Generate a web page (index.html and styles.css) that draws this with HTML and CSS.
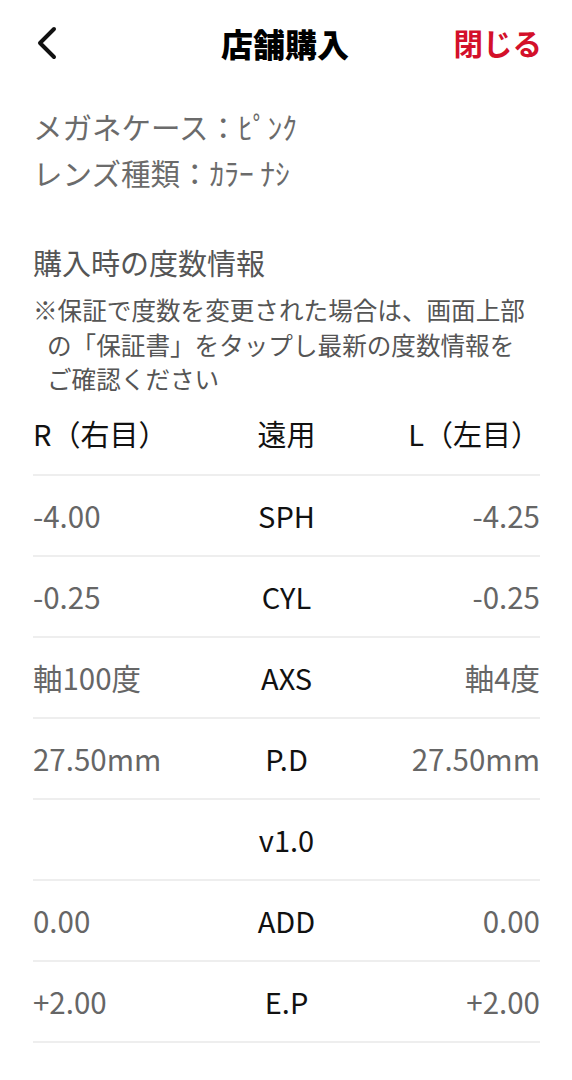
FILE: index.html
```html
<!DOCTYPE html>
<html lang="ja">
<head>
<meta charset="utf-8">
<link rel="stylesheet" href="styles.css">
</head>
<body>
<div class="page">
  <header class="topbar">
    <span class="back">
      <svg width="22" height="34" viewBox="0 0 22 34"><path d="M18 3 L4 17 L18 31" fill="none" stroke="#111" stroke-width="4" stroke-linecap="round" stroke-linejoin="round"/></svg>
    </span>
    <h1 class="title">店舗購入</h1>
    <span class="close">閉じる</span>
  </header>

  <div class="info">
    <p>メガネケース：ﾋﾟﾝｸ</p>
    <p>レンズ種類：ｶﾗｰ ﾅｼ</p>
  </div>

  <h2 class="sec-title">購入時の度数情報</h2>
  <p class="note">※保証で度数を変更された場合は、画面上部の「保証書」をタップし最新の度数情報をご確認ください</p>

  <div class="table">
    <div class="row head">
      <span class="l">R（右目）</span>
      <span class="c">遠用</span>
      <span class="r">L（左目）</span>
    </div>
    <div class="row"><span class="l">-4.00</span><span class="c">SPH</span><span class="r">-4.25</span></div>
    <div class="row"><span class="l">-0.25</span><span class="c">CYL</span><span class="r">-0.25</span></div>
    <div class="row"><span class="l">軸100度</span><span class="c">AXS</span><span class="r">軸4度</span></div>
    <div class="row"><span class="l">27.50mm</span><span class="c">P.D</span><span class="r">27.50mm</span></div>
    <div class="row"><span class="l"></span><span class="c">v1.0</span><span class="r"></span></div>
    <div class="row"><span class="l">0.00</span><span class="c">ADD</span><span class="r">0.00</span></div>
    <div class="row"><span class="l">+2.00</span><span class="c">E.P</span><span class="r">+2.00</span></div>
  </div>
</div>
</body>
</html>
```
FILE: styles.css
```css
* { box-sizing: border-box; }
html, body { margin: 0; padding: 0; background: #fff; }
body {
  font-family: "Noto Sans CJK JP", "Noto Sans", sans-serif;
  color: #111;
}
.page { padding: 0 32px 0 33px; }
.topbar {
  height: 86px;
  display: grid;
  grid-template-columns: 1fr auto 1fr;
  align-items: center;
}
.back { display: flex; align-items: center; padding-left: 3px; }
.title {
  margin: 0;
  font-size: 32px;
  font-weight: 900;
  color: #000;
  line-height: 1;
  padding-right: 3px;
}
.close {
  justify-self: end;
  font-size: 29.5px;
  font-weight: 700;
  color: #d3102a;
  line-height: 1;
  margin-right: -2px;
}
.info { padding-top: 17px; }
.info p {
  margin: 0;
  font-size: 29.5px;
  line-height: 46px;
  color: #6b6b6b;
}
.sec-title {
  margin: 47px 0 0;
  font-size: 29px;
  font-weight: 400;
  line-height: 40px;
  color: #555;
}
.note {
  margin: 10px 0 0;
  max-width: 500px;
  font-size: 24.6px;
  line-height: 34.5px;
  color: #555;
  padding-left: 14px;
  text-indent: -14px;
}
.row {
  display: grid;
  grid-template-columns: 1fr 1fr 1fr;
  align-items: center;
  height: 81px;
  border-bottom: 2px solid #eeeeee;
  font-size: 29.5px;
  color: #666;
}
.row.head {
  height: 80px;
  font-size: 29px;
  color: #111;
  padding-bottom: 4px;
}
.row .l { text-align: left; white-space: nowrap; }
.row .c { text-align: center; color: #111; font-size: 29px; }
.row .r { text-align: right; white-space: nowrap; }
.row.head .l, .row.head .r { color: #111; }
```
